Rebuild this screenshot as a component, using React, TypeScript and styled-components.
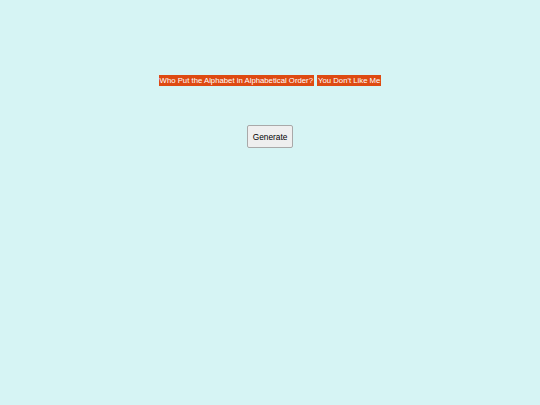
import styled, { createGlobalStyle } from 'styled-components';

const GlobalStyle = createGlobalStyle`
  html, body {
    margin: 0;
    padding: 0;
    background: #d6f4f4;
  }
  body {
    font-family: "Liberation Sans", Arial, sans-serif;
  }
`;

const Page = styled.main`
  width: 540px;
  height: 405px;
  display: flex;
  flex-direction: column;
  align-items: center;
  padding-top: 75px;
  box-sizing: border-box;
`;

const Phrases = styled.div`
  display: flex;
  gap: 3px;
  height: 11px;
`;

const Phrase = styled.span`
  background: #de4a12;
  color: #ffffff;
  font-size: 7.75px;
  line-height: 11px;
  padding: 0 1px;
  white-space: nowrap;
`;

const GenerateButton = styled.button`
  margin-top: 39px;
  width: 46px;
  height: 23px;
  padding: 0;
  font-family: "Liberation Sans", Arial, sans-serif;
  font-size: 8.3px;
  color: #000;
  background: #efefef;
  border: 1px solid #a9a9a9;
  border-radius: 2px;
  cursor: pointer;
`;

export default function App() {
  const phrases = ['Who Put the Alphabet in Alphabetical Order?', "You Don't Like Me"];
  return (
    <>
      <GlobalStyle />
      <Page>
        <Phrases>
          {phrases.map((p) => (
            <Phrase key={p}>{p}</Phrase>
          ))}
        </Phrases>
        <GenerateButton>Generate</GenerateButton>
      </Page>
    </>
  );
}
